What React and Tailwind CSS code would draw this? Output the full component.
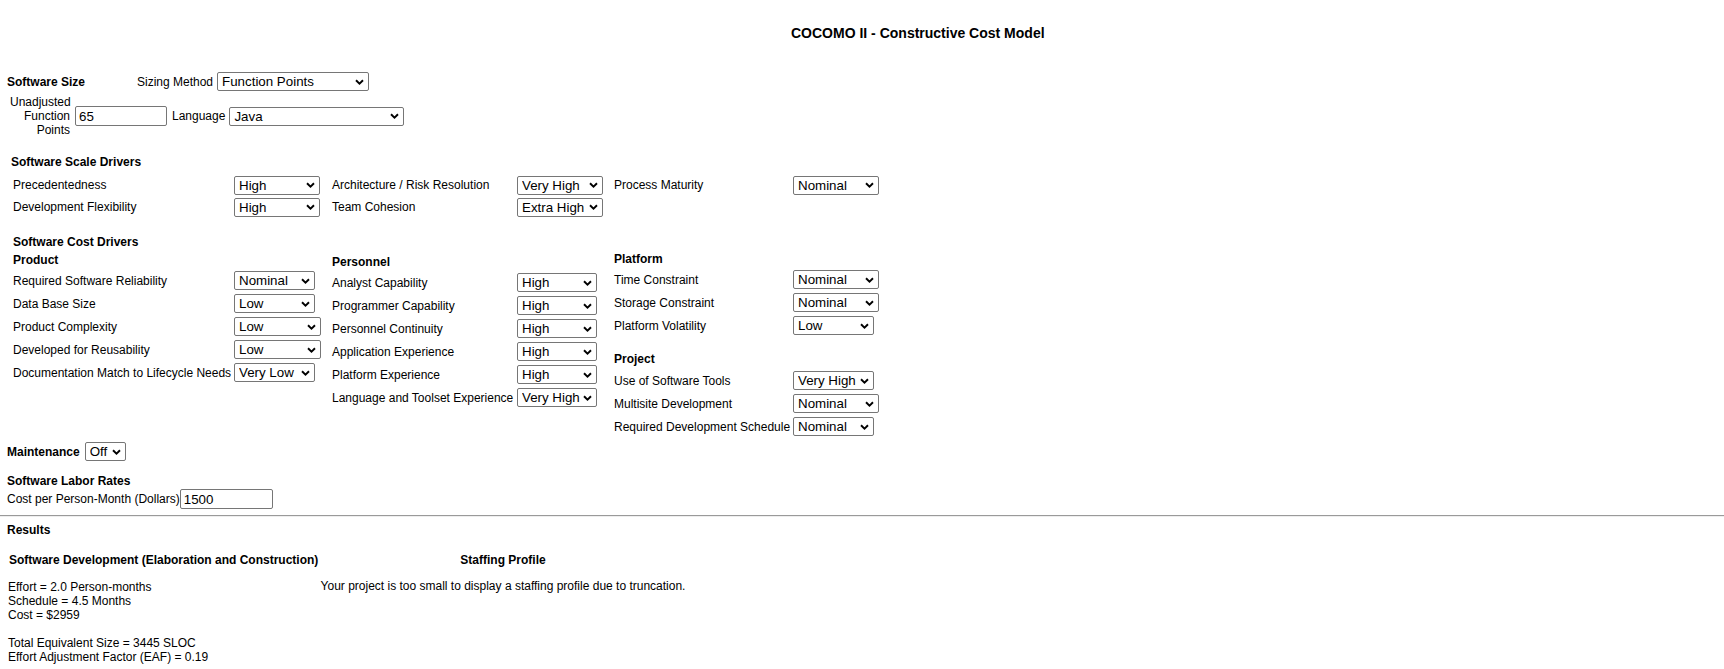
import React from "react";

const SCALE = ["Very Low", "Low", "Nominal", "High", "Very High", "Extra High"];
const COST = ["Very Low", "Low", "Nominal", "High", "Very High"];
const COST_X = ["Very Low", "Low", "Nominal", "High", "Very High", "Extra High"];

function Chevron() {
  return (
    <svg
      className="pointer-events-none absolute right-[5px] top-1/2 -translate-y-1/2"
      width="9"
      height="6"
      viewBox="0 0 9 6"
    >
      <path d="M1 1.2L4.5 4.6L8 1.2" fill="none" stroke="#000" strokeWidth="1.9" />
    </svg>
  );
}

function Sel({ className, value, opts }) {
  return (
    <span className={`relative inline-flex ${className}`}>
      <select
        defaultValue={value}
        className="h-[19px] w-full appearance-none rounded-[2px] border border-[#767676] bg-white pl-[4px] text-[13.333px] leading-[17px] text-black font-['Liberation_Sans',Arial,sans-serif] outline-none"
      >
        {opts.map((o) => (
          <option key={o} value={o}>
            {o}
          </option>
        ))}
      </select>
      <Chevron />
    </span>
  );
}

function Inp({ className, value }) {
  return (
    <input
      defaultValue={value}
      className={`h-[20px] rounded-[2px] border border-[#767676] bg-white pl-[3px] text-[13.333px] text-black font-['Liberation_Sans',Arial,sans-serif] outline-none ${className}`}
    />
  );
}

function Row({ label, value, w, opts, cols }) {
  return (
    <div className={`grid h-[23px] items-center ${cols}`}>
      <span>{label}</span>
      <Sel className={w} value={value} opts={opts} />
    </div>
  );
}

export default function App() {
  return (
    <div className="min-h-screen bg-white text-black font-['Liberation_Sans',Arial,sans-serif] text-[12px] leading-[14px]">
      <div className="pt-[25px] pl-[791px] text-[14px] font-bold leading-[16px]">
        COCOMO II - Constructive Cost Model
      </div>

      {/* Software Size */}
      <div className="mt-[31px] flex h-[19px] items-center pl-[7px]">
        <span className="w-[130px] font-bold">Software Size</span>
        <span>Sizing Method</span>
        <Sel
          className="ml-[4px] w-[152px]"
          value="Function Points"
          opts={["Source Lines of Code", "Function Points"]}
        />
      </div>
      <div className="mt-[4px] flex items-center pl-[10px]">
        <span className="w-[60px] text-right">
          Unadjusted
          <br />
          Function
          <br />
          Points
        </span>
        <Inp className="ml-[5px] w-[92px]" value="65" />
        <span className="ml-[5px]">Language</span>
        <Sel
          className="ml-[4px] w-[175px]"
          value="Java"
          opts={["Ada 95", "C", "C++", "C#", "Java", "JavaScript", "Perl", "Python"]}
        />
      </div>

      {/* Scale Drivers */}
      <div className="mt-[17px] pl-[11px] font-bold leading-[16px]">Software Scale Drivers</div>
      <div className="mt-[4px] pl-[13px]">
        <div className="grid h-[22px] grid-cols-[221px_98px_185px_97px_179px_auto] items-center">
          <span>Precedentedness</span>
          <Sel className="w-[86px]" value="High" opts={SCALE} />
          <span>Architecture / Risk Resolution</span>
          <Sel className="w-[86px]" value="Very High" opts={SCALE} />
          <span>Process Maturity</span>
          <Sel className="w-[86px]" value="Nominal" opts={SCALE} />
        </div>
        <div className="grid h-[22px] grid-cols-[221px_98px_185px_97px_179px_auto] items-center">
          <span>Development Flexibility</span>
          <Sel className="w-[86px]" value="High" opts={SCALE} />
          <span>Team Cohesion</span>
          <Sel className="w-[86px]" value="Extra High" opts={SCALE} />
        </div>
      </div>

      {/* Cost Drivers */}
      <div className="mt-[17px] pl-[13px] font-bold">Software Cost Drivers</div>
      <div className="flex items-start pl-[13px]">
        <div className="mt-[1px] w-[319px]">
          <div className="flex h-[19px] items-center font-bold">Product</div>
          <Row cols="grid-cols-[221px_auto]" label="Required Software Reliability" value="Nominal" w="w-[81px]" opts={COST} />
          <Row cols="grid-cols-[221px_auto]" label="Data Base Size" value="Low" w="w-[81px]" opts={COST} />
          <Row cols="grid-cols-[221px_auto]" label="Product Complexity" value="Low" w="w-[87px]" opts={COST_X} />
          <Row cols="grid-cols-[221px_auto]" label="Developed for Reusability" value="Low" w="w-[87px]" opts={COST_X} />
          <Row cols="grid-cols-[221px_auto]" label="Documentation Match to Lifecycle Needs" value="Very Low" w="w-[81px]" opts={COST} />
        </div>
        <div className="mt-[3px] w-[282px]">
          <div className="flex h-[19px] items-center font-bold">Personnel</div>
          <Row cols="grid-cols-[185px_auto]" label="Analyst Capability" value="High" w="w-[80px]" opts={COST} />
          <Row cols="grid-cols-[185px_auto]" label="Programmer Capability" value="High" w="w-[80px]" opts={COST} />
          <Row cols="grid-cols-[185px_auto]" label="Personnel Continuity" value="High" w="w-[80px]" opts={COST} />
          <Row cols="grid-cols-[185px_auto]" label="Application Experience" value="High" w="w-[80px]" opts={COST} />
          <Row cols="grid-cols-[185px_auto]" label="Platform Experience" value="High" w="w-[80px]" opts={COST} />
          <Row cols="grid-cols-[185px_auto]" label="Language and Toolset Experience" value="Very High" w="w-[80px]" opts={COST} />
        </div>
        <div>
          <div className="flex h-[19px] items-center font-bold">Platform</div>
          <Row cols="grid-cols-[179px_auto]" label="Time Constraint" value="Nominal" w="w-[86px]" opts={COST_X} />
          <Row cols="grid-cols-[179px_auto]" label="Storage Constraint" value="Nominal" w="w-[86px]" opts={COST_X} />
          <Row cols="grid-cols-[179px_auto]" label="Platform Volatility" value="Low" w="w-[81px]" opts={COST} />
          <div className="mt-[12px] flex h-[20px] items-center font-bold">Project</div>
          <Row cols="grid-cols-[179px_auto]" label="Use of Software Tools" value="Very High" w="w-[81px]" opts={COST} />
          <Row cols="grid-cols-[179px_auto]" label="Multisite Development" value="Nominal" w="w-[86px]" opts={COST_X} />
          <Row cols="grid-cols-[179px_auto]" label="Required Development Schedule" value="Nominal" w="w-[81px]" opts={COST} />
        </div>
      </div>

      {/* Maintenance */}
      <div className="mt-[4px] flex h-[19px] items-center pl-[7px]">
        <span className="font-bold">Maintenance</span>
        <Sel className="ml-[5px] w-[41px]" value="Off" opts={["Off", "On"]} />
      </div>

      {/* Labor Rates */}
      <div className="mt-[13px] pl-[7px] font-bold">Software Labor Rates</div>
      <div className="mt-[1px] flex h-[20px] items-center pl-[7px]">
        <span>Cost per Person-Month (Dollars)</span>
        <Inp className="w-[93px]" value="1500" />
      </div>

      <div className="mt-[6px] h-[2px] border-t border-b border-t-[#9a9a9a] border-b-[#eeeeee]" />

      {/* Results */}
      <div className="mt-[6px] pl-[7px] font-bold">Results</div>
      <div className="mt-[16px] flex pl-[8px]">
        <div className="w-[312px]">
          <div className="pl-[1px] font-bold">Software Development (Elaboration and Construction)</div>
          <div className="mt-[13px]">
            Effort = 2.0 Person-months
            <br />
            Schedule = 4.5 Months
            <br />
            Cost = $2959
            <br />
            <br />
            Total Equivalent Size = 3445 SLOC
            <br />
            Effort Adjustment Factor (EAF) = 0.19
          </div>
        </div>
        <div className="w-[366px] text-center">
          <div className="font-bold">Staffing Profile</div>
          <div className="mt-[12px]">
            Your project is too small to display a staffing profile due to truncation.
          </div>
        </div>
      </div>
    </div>
  );
}
